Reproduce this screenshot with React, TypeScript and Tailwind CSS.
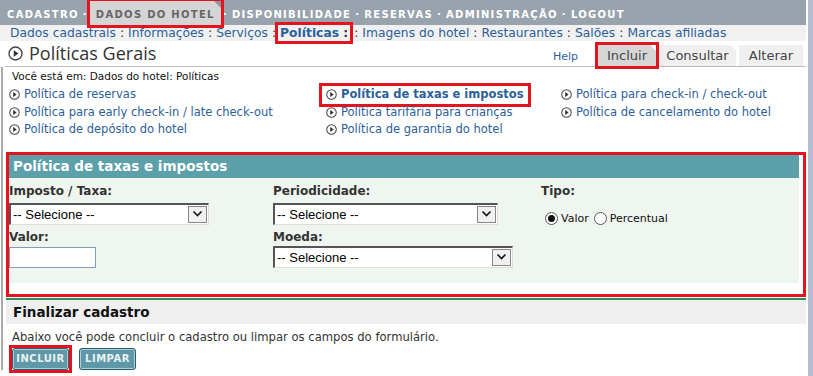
import React from 'react';

const font = { fontFamily: '"DejaVu Sans", Verdana, sans-serif' };

const PlayIcon = ({ size = 11 }: { size?: number }) => (
  <svg width={size} height={size} viewBox="0 0 12 12" className="shrink-0">
    <circle cx="6" cy="6" r="5.2" fill="#fff" stroke="#444" strokeWidth="1.1" />
    <path d="M4.6 3.4 L8.4 6 L4.6 8.6 Z" fill="#333" />
  </svg>
);

const Select = ({ width }: { width: number }) => (
  <div
    className="flex h-[22px] items-stretch bg-white border-t-2 border-l-2 border-t-[#555] border-l-[#555] border-b border-r border-b-[#ddd] border-r-[#ddd]"
    style={{ width }}
  >
    <span className="flex-1 pl-[2px] text-[13px] font-normal leading-[19px] text-black" style={{ fontFamily: '"Liberation Sans", Arial, sans-serif' }}>
      -- Selecione --
    </span>
    <span className="m-[1px] flex w-[19px] items-center justify-center border border-[#888] bg-[#f0f0f0]">
      <svg width="11" height="8" viewBox="0 0 11 8">
        <path d="M1.5 1.5 L5.5 5.5 L9.5 1.5" fill="none" stroke="#111" strokeWidth="1.6" />
      </svg>
    </span>
  </div>
);

const Radio = ({ checked }: { checked?: boolean }) => (
  <span className="flex h-[13px] w-[13px] items-center justify-center rounded-full border border-[#555] bg-white">
    {checked && <span className="h-[7px] w-[7px] rounded-full bg-[#111]" />}
  </span>
);

const navItems = ['CADASTRO', 'DADOS DO HOTEL', 'DISPONIBILIDADE', 'RESERVAS', 'ADMINISTRAÇÃO', 'LOGOUT'];
const subItems = ['Dados cadastrais', 'Informações', 'Serviços', 'Políticas', 'Imagens do hotel', 'Restaurantes', 'Salões', 'Marcas afiliadas'];

const policyCols = [
  ['Política de reservas', 'Política para early check-in / late check-out', 'Política de depósito do hotel'],
  ['Política de taxas e impostos', 'Política tarifária para crianças', 'Política de garantia do hotel'],
  ['Política para check-in / check-out', 'Política de cancelamento do hotel'],
];

export default function App() {
  return (
    <div className="relative flex h-[376px] w-[813px] overflow-hidden bg-white" style={font}>
      <div className="w-[806px]">
        {/* top menu */}
        <div className="flex h-[25px] items-end bg-[#99a3ad] pl-[7px] text-[10px] font-bold tracking-[1.3px] text-white">
          {navItems.map((item, i) => (
            <React.Fragment key={item}>
              {i > 0 && <span className="px-[4px] pb-[3px]">·</span>}
              {item === 'DADOS DO HOTEL' ? (
                <span className="relative -mx-[2px] px-[6px] pb-[3px] pt-[6px] bg-[#d5d5d5] text-[#666] outline-[3px] outline-[#e3141d]">
                  {item}
                  <span className="absolute right-0 top-0 border-l-[7px] border-t-[7px] border-l-transparent border-t-[#8c959e]" />
                </span>
              ) : (
                <span className="pb-[3px]">{item}</span>
              )}
            </React.Fragment>
          ))}
        </div>

        {/* sub menu */}
        <div className="flex h-[16px] items-center bg-[#f1f1f1] pl-[10px] text-[12.3px] leading-[16px] text-[#2b6099]">
          {subItems.map((item, i) => (
            <React.Fragment key={item}>
              {i > 0 && <span className="px-[4px] text-[#333]">:</span>}
              {item === 'Políticas' ? (
                <span className="-ml-[2px] px-[2px] font-bold outline-[3px] outline-[#e3141d]">
                  {item} <span className="text-[#333]">:</span>
                </span>
              ) : (
                <span>{item}</span>
              )}
            </React.Fragment>
          ))}
        </div>

        {/* title + tabs */}
        <div className="ml-[5px] flex h-[26px] items-end border-b border-[#bbb]">
          <div className="flex h-full items-center gap-[6px] pl-[3px]">
            <PlayIcon size={15} />
            <span className="text-[18px] text-[#333]" style={{ fontFamily: '"Open Sans", Tahoma, sans-serif' }}>Políticas Gerais</span>
          </div>
          <span className="ml-auto mr-[20px] pb-[1px] text-[11px] text-[#2b6099]">Help</span>
          <div className="mr-[3px] flex gap-[3px] text-[13px] text-[#444]">
            <span className="relative flex h-[21px] w-[58px] items-center justify-center bg-[#d6d6d6] outline-[3px] outline-[#e3141d]">
              Incluir
              <span className="absolute right-0 top-0 border-l-[6px] border-t-[6px] border-l-transparent border-t-white" />
            </span>
            <span className="relative flex h-[21px] w-[77px] items-center justify-center bg-[#efefef]">
              Consultar
              <span className="absolute right-0 top-0 border-l-[6px] border-t-[6px] border-l-transparent border-t-white" />
            </span>
            <span className="relative flex h-[21px] w-[64px] items-center justify-center bg-[#efefef]">
              Alterar
            </span>
          </div>
        </div>

        {/* content with left rule */}
        <div className="ml-[1px] border-l-2 border-[#aaa] pl-[3px]">
          <div className="pl-[6px] pt-[2px] text-[10.5px] leading-[14px] text-[#111]">Você está em: Dados do hotel: Políticas</div>

          <div className="flex pt-[3px] text-[11.5px] leading-[17.5px] text-[#2b6099]">
            {policyCols.map((col, ci) => (
              <div key={ci} className={ci === 0 ? 'w-[320px] pl-[3px]' : ci === 1 ? 'w-[235px]' : ''}>
                {col.map((p) => (
                  <div key={p} className="flex items-center gap-[4px]">
                    {p === 'Política de taxas e impostos' ? (
                      <span className="-ml-[4px] flex items-center gap-[4px] px-[4px] font-bold outline-[3px] outline-[#e3141d]">
                        <PlayIcon />
                        {p}
                      </span>
                    ) : (
                      <>
                        <PlayIcon />
                        <span>{p}</span>
                      </>
                    )}
                  </div>
                ))}
              </div>
            ))}
          </div>

          {/* form */}
          <div className="mt-[13px] border-[3px] border-[#e3141d] pr-[4px]">
            <div className="flex h-[23px] items-center bg-[#5ca0aa] pl-[4px] text-[13.5px] font-bold text-white">
              Política de taxas e impostos
            </div>
            <div className="flex h-[105px] bg-[#eff6f0] text-[12px] font-bold text-[#333]">
              <div className="w-[264px]">
                <div className="pt-[6px] leading-[14px]">Imposto / Taxa:</div>
                <div className="mt-[5px]"><Select width={200} /></div>
                <div className="mt-[5px] leading-[14px]">Valor:</div>
                <div className="mt-[3px] h-[21px] w-[87px] border border-[#7f9db9] bg-white" />
              </div>
              <div className="w-[268px]">
                <div className="pt-[6px] leading-[14px]">Periodicidade:</div>
                <div className="mt-[5px]"><Select width={225} /></div>
                <div className="mt-[5px] leading-[14px]">Moeda:</div>
                <div className="mt-[2px]"><Select width={240} /></div>
              </div>
              <div>
                <div className="pt-[6px] leading-[14px]">Tipo:</div>
                <div className="mt-[13px] flex items-center pl-[4px] text-[11px] font-normal text-[#111]">
                  <Radio checked />
                  <span className="ml-[3px] mr-[5px]">Valor</span>
                  <Radio />
                  <span className="ml-[3px]">Percentual</span>
                </div>
              </div>
            </div>
            <div className="h-[11px] bg-white" />
          </div>

          {/* finalizar */}
          <div className="mt-[1px] border-t-2 border-[#2f8f62] bg-[#efefef] pl-[7px] text-[13.5px] font-bold leading-[24px] text-[#111]">
            Finalizar cadastro
          </div>
          <div className="pl-[6px] pt-[6px] text-[11.6px] leading-[15px] text-[#333]">
            Abaixo você pode concluir o cadastro ou limpar os campos do formulário.
          </div>
          <div className="mt-[3px] flex gap-[10px] pl-[6px] text-[10px] font-bold tracking-[0.5px]">
            <span className="outline-[3px] outline-[#e3141d]">
              <span className="flex h-[22px] w-[57px] items-center justify-center rounded-[3px] border border-[#2f5e6a] bg-[#5f98a6] text-[#e8f2f4] shadow-[inset_0_0_0_1px_#a8d0da]">
                INCLUIR
              </span>
            </span>
            <span className="flex h-[22px] w-[57px] items-center justify-center rounded-[3px] border border-[#2f5e6a] bg-[#5f98a6] text-[#e8f2f4] shadow-[inset_0_0_0_1px_#a8d0da]">
              LIMPAR
            </span>
          </div>
        </div>
      </div>
      <div className="ml-[2px] w-[5px] bg-[#b6bdd0]" />
    </div>
  );
}
